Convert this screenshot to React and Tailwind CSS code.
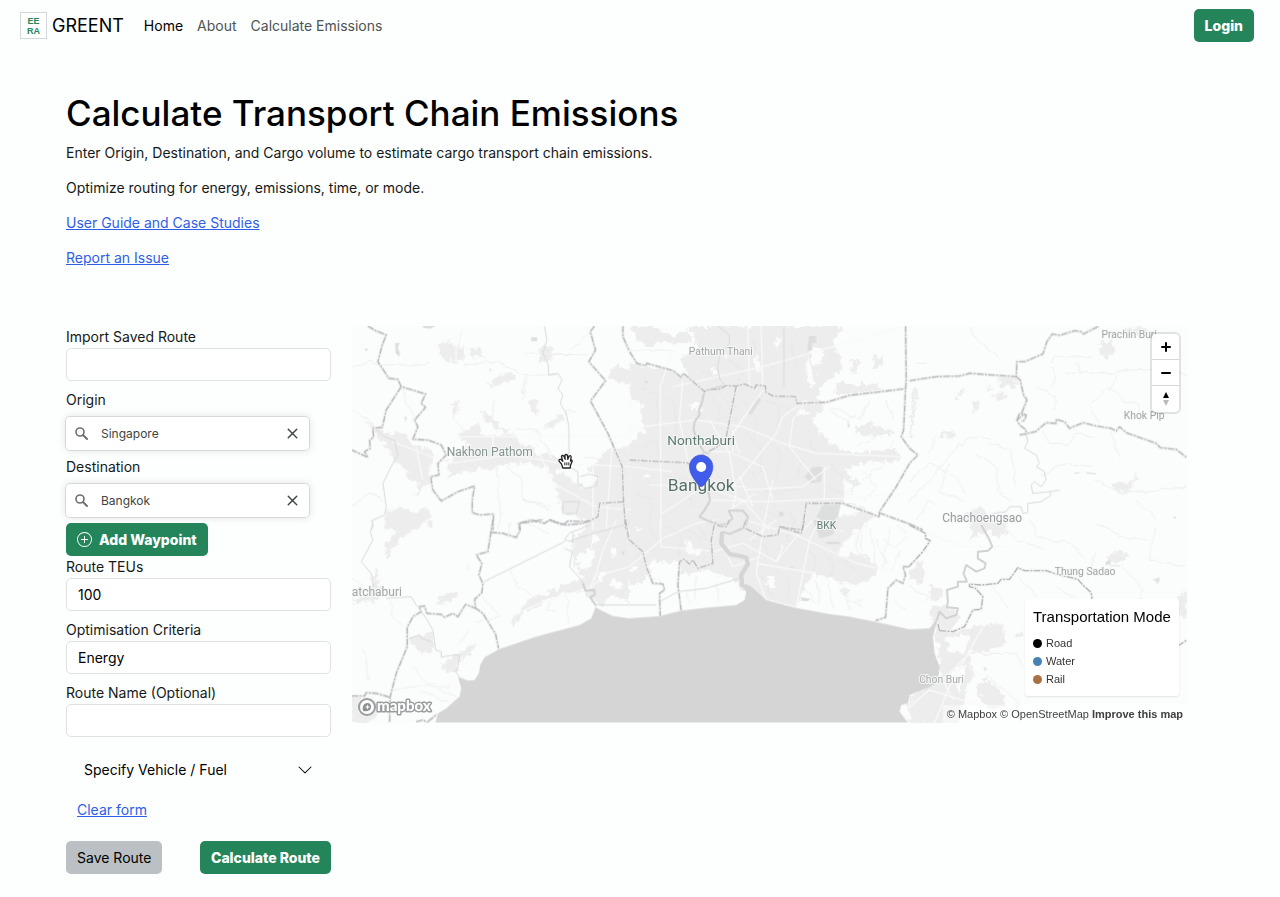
import { useState } from 'react';
import { X } from 'lucide-react';
import { BsChevronDown, BsPlusCircle } from 'react-icons/bs';

// The basemap is drawn in tiles, x and y are the offset of each tile
const tiles = [
  {
    x: 0,
    y: 0,
    urban: [
      'M275 70 L300 65 325 85 345 80 340 100 350 110 320 130 280 115 265 90Z',
      'M355 85 L395 85 395 110 365 112Z',
      'M580 75 L610 80 605 125 575 125 570 100Z',
      'M420 180 L455 165 500 160 495 180 460 185 440 200 420 195Z',
      'M535 240 L565 240 565 285 545 275Z',
      'M305 250 L330 245 328 270 310 295Z',
      'M395 270 L425 290 450 320 480 320 470 340 440 325 405 300Z',
      'M45 290 L75 320 120 340 165 340 190 375 240 385 260 410 240 440 250 480 220 500 200 530 205 480 180 480 165 440 130 420 105 370 75 340Z',
      'M325 345 L385 310 390 345 500 345 510 375 560 380 560 405 600 400 640 440 610 460 590 440 540 430 480 430 430 445 340 455 300 470 290 430 320 400 360 380Z',
      'M580 325 L620 290 650 275 640 300 610 320Z',
      'M110 575 L150 560 190 575 230 560 240 590 200 630 110 630Z',
      'M600 450 L640 460 680 490 720 510 745 470 710 450 740 425 770 390 840 380 840 630 720 630 690 590 640 580 620 500Z',
      'M770 170 L800 135 840 150 840 200 800 180Z',
    ],
    parks: [
      'M137 70 L150 68 145 85 152 100 148 110 138 98Z',
      'M165 290 L172 290 168 308Z M515 205 L522 222 517 220Z M545 52 h18 v12 h-18Z M45 85 l12 3 -8 6Z',
      'M218 18 h40 l-15 8 -20 -2Z M420 145 l8 5 -6 4Z',
    ],
    rivers: [
      'M585 18 L592 60 580 100 595 130 598 165 625 160 638 180 625 205 640 225 632 250 650 280 658 320 658 400',
      'M80 330 L105 350 135 362 145 405 130 430 100 490 110 560 105 585 70 600 65 630',
      'M658 440 L685 455 685 490 705 505 740 498 745 470 720 462 690 470 M640 545 L690 545 680 580 640 580Z',
      'M658 400 L625 420 605 405',
    ],
    roads: [
      'M6 145 L60 125 105 135 210 135 250 125 M345 135 L440 125 530 165 620 165 M6 270 L60 300 85 330',
      'M310 295 L385 375 M430 240 L430 300 M525 102 L600 102 720 105 M600 102 L660 100 720 40',
      'M530 165 L520 240 M640 275 L680 270 M500 330 L560 325 600 400 M6 560 L60 520 100 540',
      'M160 210 L190 300 M470 440 L520 480 520 540 600 570 M440 440 L450 560 450 630 M520 540 L600 560',
      'M700 412 L840 418 M340 30 L320 90',
    ],
    streets: [
      'M130 365 L300 430 480 405 640 430 840 440 M320 30 L320 130 M430 345 L430 385 M325 350 L620 350 840 350',
      'M570 400 L610 490 740 560 840 570 M730 430 V630 M790 350 L770 630 M200 380 L220 480',
    ],
    borders: [
      'M55 18 L78 32 110 45 98 75 85 125 118 175 145 178 155 200 228 222 215 250 228 262 195 300 205 320 190 358 235 360 275 375 290 405 265 430 268 465 243 470 250 510 275 543 325 515 375 498 368 540 368 578 390 585 432 582 430 630',
      'M155 200 L110 270 98 322 70 325 72 350 60 362 62 385 45 395 55 412 40 405 6 390',
      'M735 18 L722 35 738 90 718 125 768 182 723 243 775 340 818 440 822 545 828 630',
      'M822 545 L750 550 745 590 715 605 655 603 640 615 600 600 585 610 545 600 508 610 510 630',
      'M820 18 L820 50 838 90',
    ],
  },
  {
    x: 840,
    y: 0,
    urban: [
      'M0 130 L120 150 180 170 150 110 200 90 190 40 175 18 450 18 640 18 615 60 640 150 580 190 560 230 590 260 550 300 580 350 620 380 680 400 800 390 820 420 700 430 640 450 690 490 640 540 730 575 700 630 0 630Z',
      'M0 18 L70 18 130 50 170 30 190 60 150 80 110 60 60 80 20 60Z',
      'M620 190 L640 180 660 195 740 190 760 210 640 225 610 220Z M680 320 L720 310 800 340 740 350 690 345Z',
      'M730 110 h30 v30 h-30Z M665 120 h22 v38 h-22Z',
    ],
    gaps: [
      'M180 250 L215 245 215 268 180 268Z',
      'M0 240 L40 250 30 290 50 330 20 350 0 370Z',
      'M385 100 L395 160 370 120Z M440 50 L460 60 440 90Z M550 80 l35 10 -10 40 -30 5Z M530 110 l25 50 -5 50 -20 -30Z',
      'M640 480 l30 20 -20 30Z M240 140 l20 5 -10 20Z M40 470 l20 -10 0 20Z M280 100 l20 4 -12 14Z',
      'M505 270 h30 v14 h-30Z M590 545 L690 560 670 590 610 575Z',
    ],
    parks: [
      'M538 48 h22 v22 h-12 v22 h-15Z',
      'M355 280 L385 230 395 240 365 285Z',
      'M525 470 L550 440 580 440 575 485 545 490Z',
      'M560 590 L580 555 635 550 625 590 600 615Z',
      'M448 575 h14 v14 h-14Z M45 180 l15 6 -12 6Z M655 295 l6 25 -6 5Z',
    ],
    rivers: [
      'M265 18 L300 45 298 72 270 105 264 145 272 180 288 197',
      'M463 18 V200',
    ],
    wide: [
      'M288 197 L225 212 218 245 208 270 210 285 195 305 192 330 205 365 222 395 240 402 M222 400 L215 440 232 500 242 540 225 570 210 590 240 605',
      'M240 602 L262 615 295 612 308 595 298 572 340 572 355 590 348 615 330 630',
    ],
    roads: [
      'M720 240 L690 300 610 260 M740 350 L680 380 M600 260 L640 300 680 290 M700 450 L740 500 700 540',
      'M0 90 L130 90 M770 240 L790 300 M790 360 L760 440 700 480',
    ],
    lanes: [
      'M30 200 L90 230 80 320 M110 230 L140 260 130 380 M40 390 L80 360 90 420 M20 520 L70 540 60 610 M110 470 L190 480 180 560',
      'M240 220 L270 260 260 330 M280 240 L320 260 M340 240 L380 300 370 360 M410 240 L450 260 440 330 M470 250 L500 300 M350 340 L400 390 390 460',
      'M410 350 L450 400 440 470 M470 380 L520 420 500 480 M340 430 L380 470 M250 440 L280 480 270 530 M400 500 L450 520 500 510 M390 560 L440 590 M480 570 L500 620',
      'M300 120 L340 150 330 180 M220 150 L250 170 M370 60 L390 110 M400 120 L440 150 M480 60 L500 140 M600 430 L640 470 M590 500 L640 520 M540 350 L560 400 M280 290 L330 300',
    ],
    streets: [
      'M95 630 L92 200 130 90 M160 180 L150 300 175 420 M0 325 L200 300 340 320 460 370 560 400 820 410',
      'M130 200 L400 140 820 20 M395 18 L400 200 M355 18 L360 200',
      'M330 400 L310 340 400 210 M320 490 L440 340 460 290 530 240 M370 560 L330 470 M310 400 L400 440 430 540 M350 510 L520 500 600 440',
      'M0 440 L130 455 M60 495 L350 500 M240 300 L300 400 320 520 300 600 M240 395 H310 V330 M530 240 L490 300 480 380 560 480 M585 440 V540 M520 540 L640 535 840 520',
      'M240 540 L420 545 520 540 M100 580 L220 500 340 540 420 630 M300 570 L380 520 M400 630 L430 480',
    ],
    borders: [
      'M0 95 L22 130 48 137 52 130 130 152 155 172 162 160 225 215 240 208 272 207 288 197 320 198 345 192 375 205 380 195 408 198 408 215 430 228 498 230 502 250 590 247 660 226 828 206',
      'M320 198 L300 300 290 350 265 380 235 395',
      'M828 18 L830 180 828 206 822 330 815 350 840 385',
      'M840 430 L800 500 750 575 748 590 640 550 530 550 518 630 450 620 M748 578 L840 612',
      'M0 420 L100 425 170 428 200 440',
    ],
  },
  {
    x: 1680,
    y: 0,
    urban: [
      'M570 70 L610 60 610 100 590 115 570 95Z M640 25 L700 20 720 40 650 45Z',
      'M265 170 h55 v30 l-50 0Z M230 200 l20 5 -5 10 -15 -2Z M255 220 h35 v18 h-35Z',
      'M195 240 h15 v35 h-20Z M90 335 h45 v16 h-45Z M150 208 h15 v14 h-15Z M138 228 h8 v15 h-8Z',
      'M15 200 L25 202 8 350 0 350Z',
      'M605 500 L640 485 660 490 685 458 675 490 650 520 620 512Z M160 580 L220 560 240 600 220 630 190 630Z',
    ],
    parks: ['M790 592 l8 -4 2 10Z M20 625 l6 2Z'],
    rivers: [
      'M350 340 L355 365 345 385 380 405 390 430 380 440 405 455 410 480 395 500 375 485 365 495 370 520 420 515 425 525 395 545 355 550 355 578 340 580 335 560 300 560 290 575 250 580 M495 460 L510 458 M420 515 L450 510 M530 458 L560 462',
    ],
    roads: [
      'M180 18 L200 60 270 110 M425 130 L440 115 545 108 M420 140 L440 170 420 200 M460 160 L520 155 600 160 720 145 840 165',
      'M540 250 L600 200 640 240 690 260 M625 165 L600 210 M540 260 L570 310 M600 320 L630 410 M690 260 L690 310 M400 330 L420 370 480 370',
      'M0 550 L150 370 M0 480 L60 430 140 470 170 520 M150 380 L170 350 250 360 M200 400 L260 440 270 520 300 540 M240 370 L300 390 320 500',
      'M60 400 L80 350 M400 470 L460 430 550 440 M550 480 L640 520 840 500 M680 540 L740 600 M20 600 L60 540 80 560 M480 370 L500 340 550 350 M120 430 L90 520 160 540',
      'M380 200 L440 230 430 270 M20 130 L50 130 M500 120 L520 155',
    ],
    streets: [],
    borders: [
      'M0 182 L80 170 150 168 180 160 320 170 322 125 345 125 400 102 412 65 428 42 450 46 495 32 515 35 522 42 568 18',
      'M320 170 L332 180 342 225 352 240 338 275 340 285 322 300 330 315 350 330 348 345',
      'M330 345 L378 335 410 308 440 310 440 298 465 305 480 325 522 308 560 318 605 325 620 333 630 320 650 338 740 370 752 383 800 388 832 413',
      'M0 385 L25 405 0 430 M322 300 L330 280 350 285 345 300 335 305 M0 612 L40 630',
    ],
  },
  {
    x: 0,
    y: 600,
    urban: [
      'M150 0 L180 0 195 30 150 60 125 90 115 125 105 110 110 70 130 40Z',
      'M75 145 L88 150 85 200 100 220 80 245 20 250 6 240 50 225 70 200Z',
      'M260 235 L320 215 322 230 290 250 260 250Z',
      'M175 360 L200 345 250 335 250 395 215 398Z M275 440 L300 415 380 370 370 395 320 430 330 455 290 458Z',
      'M480 315 L500 285 540 235 620 210 640 190 680 185 700 170 670 120 665 70 720 10 840 0 840 245 780 225 760 260 730 245 700 215 640 220 590 240 550 265 510 290 495 315Z',
      'M6 525 L45 530 80 540 90 575 60 608 6 608Z M230 5 h20 v15 h-15Z M355 140 l15 -5 -5 12Z',
    ],
    gaps: [
      'M680 110 L720 85 740 90 720 150 690 140Z M745 160 L770 150 755 195Z M720 50 l25 -5 0 20 -20 15Z M780 190 l30 -10 10 20 -30 5Z M790 80 l15 20 -20 10Z',
    ],
    parks: ['M815 95 l12 -2 -6 14Z'],
    rivers: [
      'M65 0 L72 15 62 35 70 60 35 125 65 160 72 200 M110 235 L185 230 200 255 230 295 250 330 258 390 275 395 275 412 310 405 330 405 325 440 318 455 330 470',
      'M645 60 L660 38 690 28 720 15 M645 60 L670 65 670 35 M645 85 L668 95 660 140 700 185 708 210',
      'M180 355 L210 345 215 355 245 365 250 370 M400 187 L645 65 M665 60 L840 10 M745 255 H840',
    ],
    wide: ['M700 190 L708 212 735 210 735 225 722 232 740 258'],
    roads: [
      'M125 240 L130 290 165 320 M400 230 L450 290 380 305 M330 370 L355 330 M480 150 L500 200 550 220 M600 240 L590 270 620 270 M6 170 L40 200',
      'M650 230 L658 310 M480 5 L470 60 M540 10 L600 40 M40 390 L60 480 M130 510 L260 490 M190 440 L240 500 300 500 M250 500 L320 530 M220 520 L300 545',
    ],
    streets: ['M480 290 L560 255 690 212 720 205 770 160 840 140 M735 180 L760 90 800 0 M720 205 L740 160'],
    borders: [
      'M430 0 L415 95 380 105 397 130 388 165 400 190 397 218 375 238 378 265 348 253 325 290 310 280 285 292 275 283 232 280 225 258 208 260 215 275 190 290 173 322 173 380 140 460 122 530 120 608',
      'M375 262 L400 280 438 342 447 385 M422 37 L460 40 500 52 512 30 510 10 545 5 580 0 M6 528 L45 528 50 518 80 520 122 532',
      'M600 0 L650 15 700 10 720 0 M828 0 L838 60 M200 605 L220 600 235 608 M235 605 L262 583',
    ],
  },
  {
    x: 840,
    y: 600,
    urban: [
      'M0 0 L640 0 630 30 650 60 620 110 700 100 745 140 740 165 700 190 640 190 560 160 530 190 510 240 500 265 400 240 330 200 320 180 230 150 160 165 150 130 110 130 70 120 50 180 0 190Z',
      'M640 20 L670 30 660 60 640 50Z M635 205 l25 5 -5 20 -20 -5Z',
    ],
    gaps: [
      'M415 170 L440 180 440 200 425 210 410 195Z M165 70 L185 60 190 90 220 85 210 105 175 100Z M455 75 L465 70 460 90Z M490 30 l15 0 -8 15Z M20 20 l20 5 -15 12Z M0 150 l20 -15 0 30Z',
    ],
    parks: ['M480 138 l15 6 -10 6Z M515 232 l28 4 -8 8 -20 -2Z', 'M550 0 H620 L610 45 570 55Z M590 65 h40 v8 h-40Z'],
    rivers: ['M0 255 H80 M90 245 L145 215 230 205 330 175'],
    wide: ['M255 5 L270 18 290 18 300 0', 'M355 0 L340 25 300 42 278 35'],
    thick: ['M278 35 L275 70 300 102 350 112 355 132 335 165 338 200'],
    roads: [
      'M60 170 L100 190 M170 215 L180 250 M200 170 L200 240 M260 200 L270 245 M680 40 L690 160 M720 20 L740 130 M760 60 L800 80 830 50 M560 180 L570 260 M600 190 L610 270',
      'M740 60 L770 130 M520 200 L560 250 M650 240 L700 260 M690 30 L700 100 M640 200 L660 270 M780 20 L760 140 M810 90 L790 150 M675 255 L690 240 M690 250 L705 238 M800 250 L830 270 M800 10 L830 40',
    ],
    lanes: [
      'M110 20 L160 50 150 110 M180 30 L230 60 M370 60 L420 90 400 140 M440 150 L480 180 470 240 M520 80 L560 110 550 150 M580 100 L610 130 600 170',
      'M640 120 L680 150 M310 60 L350 80 M400 170 L430 230 M470 20 L480 60 M20 60 L30 120 M60 20 L80 60 M210 20 L230 50',
    ],
    streets: [
      'M0 140 L100 55 200 10 260 0 M90 0 L95 80 220 90 250 95 340 70 440 125 500 50 550 0 M345 0 L500 45 680 130 820 160',
      'M400 30 L380 160 410 240 500 262 M440 125 L460 80 M500 262 L540 60 570 0 M390 110 L310 140 280 80',
      'M380 130 L560 160 M360 60 L440 0',
    ],
    borders: [
      'M0 60 L40 95 50 140 70 190 100 192 105 210 90 220 92 288',
      'M155 272 L145 195 150 125 162 117 180 132 190 120 205 145 250 130 245 60 255 10 270 18 290 20 300 0',
      'M350 0 L340 22 400 50 445 45 450 20 515 40 525 0 M840 140 L820 140 828 165 820 190 800 180 775 205 768 292 738 302',
    ],
  },
  {
    x: 1680,
    y: 600,
    urban: [
      'M590 110 L630 95 655 95 640 130 605 135Z M730 180 l25 -5 -8 15Z',
      'M60 265 L110 255 150 290 120 340 190 320 280 310 290 370 250 390 180 400 190 470 160 540 150 608 0 608 0 530 60 500 90 480 90 400 75 330Z',
      'M200 490 L240 480 280 520 290 560 240 570 210 530Z M200 0 L300 10 270 60 240 30 180 60Z M0 150 L40 120 40 190 0 170Z M60 190 L100 220 90 245 60 230Z',
      'M800 240 L832 200 832 290 810 290Z M310 340 l30 -5 -10 30Z',
    ],
    gaps: ['M110 350 L180 345 170 395 120 400Z M120 460 L170 430 150 520Z'],
    parks: ['M588 125 l15 -4 0 12 -14 2Z M733 178 l18 -6 -6 16Z M222 440 l10 6 -6 8Z'],
    rivers: [],
    wide: [
      'M215 15 L240 60 248 80 235 92 205 95 205 115 228 130 225 145 200 155 170 135 162 160 172 185 145 185 145 200 112 210 115 245 112 262 145 265 140 285 110 295 90 275 82 300',
    ],
    roads: [
      'M240 0 L330 60 400 90 M360 0 L380 50 480 70 520 110 M560 10 L640 50 720 60 M740 20 L720 120 830 140 M440 200 L500 240 M330 170 L380 230 M400 400 L380 500 M0 200 L60 230 40 250',
      'M100 400 L320 400 340 440 M230 470 L320 540 330 608 M640 140 L700 210 690 240 M250 200 L300 270 M560 90 L540 170',
    ],
    streets: ['M0 20 L160 80 300 80 M75 608 L120 500 220 320 M0 560 L60 510 220 560 M180 400 L100 480 130 540'],
    borders: [
      'M0 15 L48 40 48 55 62 62 40 95 0 138',
      'M90 332 L130 335 165 320 190 270 215 268 220 230 198 205 180 200 180 192 215 195 265 190 275 178 300 178 325 143 345 152 410 152 440 162 505 178 520 195 545 218 548 240 M805 378 L832 360',
      'M90 332 L85 310',
    ],
  },
];

const WATER =
  'M258 1208 L265 1180 290 1165 330 1130 335 1105 325 1070 355 1082 375 1080 388 1060 392 1035 405 1012 447 988 560 950 690 915 725 895 738 862 790 888 840 895 930 888 995 872 1080 862 1160 855 1185 840 1190 815 1172 795 1190 792 1205 800 1250 840 1330 862 1440 882 1500 890 1575 905 1680 928 1740 925 1755 905 1765 895 1750 950 1755 1000 1770 1040 1765 1085 1745 1100 1680 1125 1675 1150 1655 1155 1650 1175 1675 1208Z';

const places = [
  { name: 'Pathum Thani', x: 1114, y: 104, style: 'fill-[#a3a6a8] text-[31px]' },
  { name: 'Nonthaburi', x: 1055, y: 374, style: 'fill-[#5f7a70] text-[41px]' },
  { name: 'Bangkok', x: 1055, y: 514, style: 'fill-[#58706a] text-[52px]' },
  { name: 'Nakhon Pathom', x: 421, y: 408, style: 'fill-[#84958f] text-[36px]' },
  { name: 'BKK', x: 1431, y: 626, style: 'fill-[#5f7a70] text-[31px]' },
  { name: 'Prachin Buri', x: 2339, y: 54, style: 'fill-[#a3a6a8] text-[31px]' },
  { name: 'Khok Pip', x: 2384, y: 296, style: 'fill-[#a3a6a8] text-[31px]' },
  { name: 'Chachoengsao', x: 1898, y: 605, style: 'fill-[#9a9da0] text-[36px]' },
  { name: 'Thung Sadao', x: 2207, y: 766, style: 'fill-[#a3a6a8] text-[31px]' },
  { name: 'Chon Buri', x: 1776, y: 1088, style: 'fill-[#a9acae] text-[31px]' },
  { name: 'atchaburi', x: 82, y: 829, style: 'fill-[#a3a6a8] text-[36px]' },
];

const Layer = ({ name, className, filter }) => (
  <g className={className} filter={filter}>
    {tiles.map((tile) => (
      <g key={`${tile.x}-${tile.y}`} transform={`translate(${tile.x} ${tile.y})`}>
        {(tile[name] || []).map((d) => (
          <path key={d} d={d} />
        ))}
      </g>
    ))}
  </g>
);

const BaseMap = () => (
  <svg
    viewBox="6 18 2508 1191"
    preserveAspectRatio="xMidYMid slice"
    className="block h-[397px] w-full bg-[#fbfcfc]"
    role="img"
    aria-label="Map of Bangkok"
  >
    <defs>
      <filter id="rough" filterUnits="userSpaceOnUse" x="0" y="0" width="2520" height="1220">
        <feTurbulence type="fractalNoise" baseFrequency="0.06" numOctaves="3" seed="4" result="noise" />
        <feDisplacementMap in="SourceGraphic" in2="noise" scale="30" xChannelSelector="R" yChannelSelector="G" />
      </filter>
      <filter id="wobble" filterUnits="userSpaceOnUse" x="0" y="0" width="2520" height="1220">
        <feTurbulence type="fractalNoise" baseFrequency="0.03" numOctaves="2" seed="9" result="noise" />
        <feDisplacementMap in="SourceGraphic" in2="noise" scale="20" xChannelSelector="R" yChannelSelector="G" />
      </filter>
    </defs>
    <Layer name="urban" className="fill-[#ededed]" filter="url(#rough)" />
    <Layer name="gaps" className="fill-[#fbfcfc]" filter="url(#rough)" />
    <Layer name="parks" className="fill-[#dddfdf]" />
    <Layer name="roads" className="fill-none stroke-[#eeefef] stroke-[3px]" filter="url(#wobble)" />
    <Layer name="lanes" className="fill-none stroke-[#e0e1e1] stroke-[2px] [stroke-dasharray:8_4]" filter="url(#wobble)" />
    <Layer name="streets" className="fill-none stroke-[#f9f9f9] stroke-[4px] [stroke-linejoin:round]" />
    <path d={WATER} className="fill-[#d5d5d5]" />
    <Layer name="rivers" className="fill-none stroke-[#d8d9da] stroke-[3px] [stroke-linejoin:round]" />
    <Layer name="wide" className="fill-none stroke-[#d0d1d1] stroke-[6px] [stroke-linejoin:round]" />
    <Layer name="thick" className="fill-none stroke-[#d5d5d5] stroke-[13px] [stroke-linejoin:round]" />
    <Layer name="borders" className="fill-none stroke-[#f0f0f1] stroke-[9px] [stroke-linejoin:round]" />
    <Layer
      name="borders"
      className="fill-none stroke-[#b6b7ba] stroke-[4px] [stroke-dasharray:20_4_6_4] [stroke-linejoin:round]"
    />
    <g className="stroke-[#f6f7f7] stroke-[6px] font-[Roboto,sans-serif] [paint-order:stroke] [stroke-linejoin:round]">
      {places.map((place) => (
        <text key={place.name} x={place.x} y={place.y} textAnchor="middle" className={place.style}>
          {place.name}
        </text>
      ))}
    </g>
    {/* Destination marker */}
    <path
      d="M1055 405 C1036 405 1020 421 1020 440 C1020 462 1034 477 1045 493 Q1050 500 1055 500 Q1060 500 1065 493 C1076 477 1090 462 1090 440 C1090 421 1074 405 1055 405Z"
      className="fill-[#3f5cea] stroke-[#3650d0] stroke-[2px]"
    />
    <circle cx="1055" cy="441" r="15" className="fill-white" />
    {/* Grab hand */}
    <path
      d="M640 444 L636 432 629 424 Q627 417 634 418 L640 424 636 410 Q637 404 643 408 L647 418 646 406 Q649 401 654 406 L655 418 659 408 Q664 405 665 411 L663 423 Q668 418 668 424 L663 436 662 444Z"
      className="fill-white stroke-[#222] stroke-[4px] [stroke-linejoin:round]"
    />
    <path d="M646 427 V436 M652 427 V436 M658 427 V436" className="stroke-[#222] stroke-[3px]" />
  </svg>
);

const MapboxLogo = () => (
  <svg viewBox="0 0 80 20" className="h-5 w-20" role="img" aria-label="Mapbox">
    <circle cx="10" cy="10" r="8" className="fill-white stroke-[#9b9e9f] stroke-2" />
    <path d="M6 14 C5 9 7 6 10.500 6 A3.800 3.800 0 0 1 14 10 C14 13 11 15 6 14Z" className="fill-[#8e9193]" />
    <path d="M10.500 7.500 L11.200 9.300 13 10 11.200 10.700 10.500 12.500 9.800 10.700 8 10 9.800 9.300Z" className="fill-white" />
    <text
      x="20"
      y="14"
      className="fill-white stroke-[#9b9e9f] stroke-[3px] font-[Lato,sans-serif] text-[15px] font-black [paint-order:stroke] [stroke-linejoin:round]"
    >
      mapbox
    </text>
  </svg>
);

const legend = [
  { name: 'Road', color: 'bg-black' },
  { name: 'Water', color: 'bg-[#4682b4]' },
  { name: 'Rail', color: 'bg-[#a97142]' },
];

const MapPanel = () => (
  <section className="relative min-w-0 flex-1 overflow-hidden font-['Liberation_Sans',Arial,sans-serif]">
    <BaseMap />
    <div className="absolute top-2 right-2 flex w-[27px] flex-col divide-y divide-[#d8d8d8] rounded bg-white ring-2 ring-black/10">
      <button aria-label="Zoom in" className="flex h-[26px] items-center justify-center">
        <svg viewBox="0 0 12 12" className="size-3 stroke-black stroke-2 [stroke-linecap:round]">
          <path d="M6 2 V10 M2 6 H10" />
        </svg>
      </button>
      <button aria-label="Zoom out" className="flex h-[26px] items-center justify-center">
        <svg viewBox="0 0 12 12" className="size-3 stroke-black stroke-2 [stroke-linecap:round]">
          <path d="M2 6 H10" />
        </svg>
      </button>
      <button aria-label="Reset bearing to north" className="flex h-[26px] items-center justify-center">
        <svg viewBox="0 0 12 16" className="h-4 w-3">
          <path d="M3 7 L6 1 9 7Z" className="fill-black" />
          <path d="M3 9 L6 15 9 9Z" className="fill-[#bbb]" />
        </svg>
      </button>
    </div>
    <div className="absolute right-2 bottom-[27px] w-[154px] rounded-[3px] bg-white px-2 pt-2 pb-2 shadow-[0_1px_2px_rgba(0,0,0,0.1)]">
      <h2 className="mb-[7px] text-[15px] leading-5 whitespace-nowrap text-black">Transportation Mode</h2>
      <ul>
        {legend.map((item) => (
          <li key={item.name} className="flex h-[18px] items-center gap-1 text-[11px] text-[#333]">
            <span className={`size-[9px] rounded-full ${item.color}`} />
            {item.name}
          </li>
        ))}
      </ul>
    </div>
    <a href="#mapbox" className="absolute bottom-[6px] left-[5px]">
      <MapboxLogo />
    </a>
    <div className="absolute right-0 bottom-0 flex gap-[3px] bg-white/50 px-1 text-[11px] leading-[18px] text-[#404040]">
      <a href="#mapbox">© Mapbox</a>
      <a href="#osm">© OpenStreetMap</a>
      <a href="#improve" className="font-bold">Improve this map</a>
    </div>
  </section>
);

const Navbar = () => (
  <header className="flex h-[51px] items-center justify-between pr-[26px] pl-5">
    <nav className="flex items-center">
      <a href="#home" className="mr-5 flex items-center gap-[5px] text-[18px] text-black">
        <svg viewBox="0 0 27 27" className="size-[27px]" aria-hidden="true">
          <rect x="0.500" y="0.500" width="26" height="26" className="fill-white stroke-[#d5d8d8]" />
          <g textAnchor="middle" className="fill-[#26855a] font-['Liberation_Sans',Arial,sans-serif] text-[9px] font-bold">
            <text x="13.500" y="12">EE</text>
            <text x="13.500" y="22">RA</text>
          </g>
        </svg>
        GREENT
      </a>
      <div className="flex gap-[14px] text-[#4d5452]">
        <a href="#home" className="text-black">Home</a>
        <a href="#about">About</a>
        <a href="#calculate">Calculate Emissions</a>
      </div>
    </nav>
    <button className="h-[33px] rounded-[5px] bg-[#25855a] px-[11px] font-extrabold text-white">Login</button>
  </header>
);

const FIELD = 'block h-[33px] w-full appearance-none rounded-[5px] border border-[#dee2e3] bg-white px-[11px] text-black';

const PlaceSearch = ({ id, label, value, onChange }) => (
  <div className="mb-[6px]">
    <label htmlFor={id} className="block">{label}</label>
    <div className="mt-[6px] flex h-[33px] w-[243px] items-center rounded bg-white px-2 shadow-[0_0_8px_1px_rgba(0,0,0,0.1),0_0_0_1px_rgba(0,0,0,0.1)]">
      <svg viewBox="0 0 15 15" className="size-[15px] shrink-0 fill-none stroke-[#6b706e]" aria-hidden="true">
        <circle cx="6" cy="6" r="4" strokeWidth="1.600" />
        <path d="M9 9 L13 13" strokeWidth="2" strokeLinecap="round" />
      </svg>
      <input
        id={id}
        type="text"
        value={value}
        onChange={(e) => onChange(e.target.value)}
        className="ml-3 min-w-0 flex-1 text-[12px] text-[#404543] outline-none"
      />
      <button type="button" aria-label={`Clear ${label}`} onClick={() => onChange('')}>
        <X size={17} strokeWidth={2} className="text-[#3f4644]" />
      </button>
    </div>
  </div>
);

const RouteForm = () => {
  const [origin, setOrigin] = useState('Singapore');
  const [destination, setDestination] = useState('Bangkok');
  const [teus, setTeus] = useState('100');
  const [routeName, setRouteName] = useState('');

  return (
    <form className="w-[265px] shrink-0" onSubmit={(e) => e.preventDefault()}>
      <div className="mb-2">
        <label htmlFor="saved" className="block">Import Saved Route</label>
        <select id="saved" className={FIELD}>
          <option value=""></option>
        </select>
      </div>
      <PlaceSearch id="origin" label="Origin" value={origin} onChange={setOrigin} />
      <PlaceSearch id="destination" label="Destination" value={destination} onChange={setDestination} />
      <button type="button" className="flex h-[33px] items-center gap-[7px] rounded-[5px] bg-[#25855a] px-[11px] font-extrabold text-white">
        <BsPlusCircle size={15} />
        Add Waypoint
      </button>
      <div className="mb-2">
        <label htmlFor="teus" className="block">Route TEUs</label>
        <input id="teus" type="text" inputMode="numeric" value={teus} onChange={(e) => setTeus(e.target.value)} className={FIELD} />
      </div>
      <div className="mb-2">
        <label htmlFor="criteria" className="block">Optimisation Criteria</label>
        <select id="criteria" className={FIELD}>
          <option>Energy</option>
          <option>Emissions</option>
          <option>Time</option>
        </select>
      </div>
      <div>
        <label htmlFor="name" className="block">Route Name (Optional)</label>
        <input id="name" type="text" value={routeName} onChange={(e) => setRouteName(e.target.value)} className={FIELD} />
      </div>
      <button type="button" className="mt-[13px] flex h-10 w-full items-center justify-between px-[18px] text-black">
        Specify Vehicle / Fuel
        <BsChevronDown size={16} />
      </button>
      <a href="#clear" className="mt-[9px] ml-[11px] inline-block text-[#2f5fe8] underline">Clear form</a>
      <div className="mt-5 flex justify-between">
        <button type="button" className="h-[33px] rounded-[5px] bg-[#bbc0c4] px-[11px] text-black">Save Route</button>
        <button type="submit" className="h-[33px] rounded-[5px] bg-[#25855a] px-[11px] font-extrabold text-white">Calculate Route</button>
      </div>
    </form>
  );
};

const App = () => (
  <div className="min-h-screen bg-[#fdfefe] font-[Inter,sans-serif] text-[14px] leading-[22px] text-[#151917]">
    <Navbar />
    <main className="pt-10 pr-[93px] pb-[22px] pl-[66px]">
      <h1 className="mb-[6px] text-[35px] leading-[45px] font-medium text-black">Calculate Transport Chain Emissions</h1>
      <div className="flex flex-col items-start gap-[13px]">
        <p>Enter Origin, Destination, and Cargo volume to estimate cargo transport chain emissions.</p>
        <p>Optimize routing for energy, emissions, time, or mode.</p>
        <a href="#guide" className="text-[#2f5fe8] underline">User Guide and Case Studies</a>
        <a href="#issue" className="text-[#2f5fe8] underline">Report an Issue</a>
      </div>
      <div className="mt-[57px] flex items-start gap-[21px]">
        <RouteForm />
        <MapPanel />
      </div>
    </main>
  </div>
);

export default App;
